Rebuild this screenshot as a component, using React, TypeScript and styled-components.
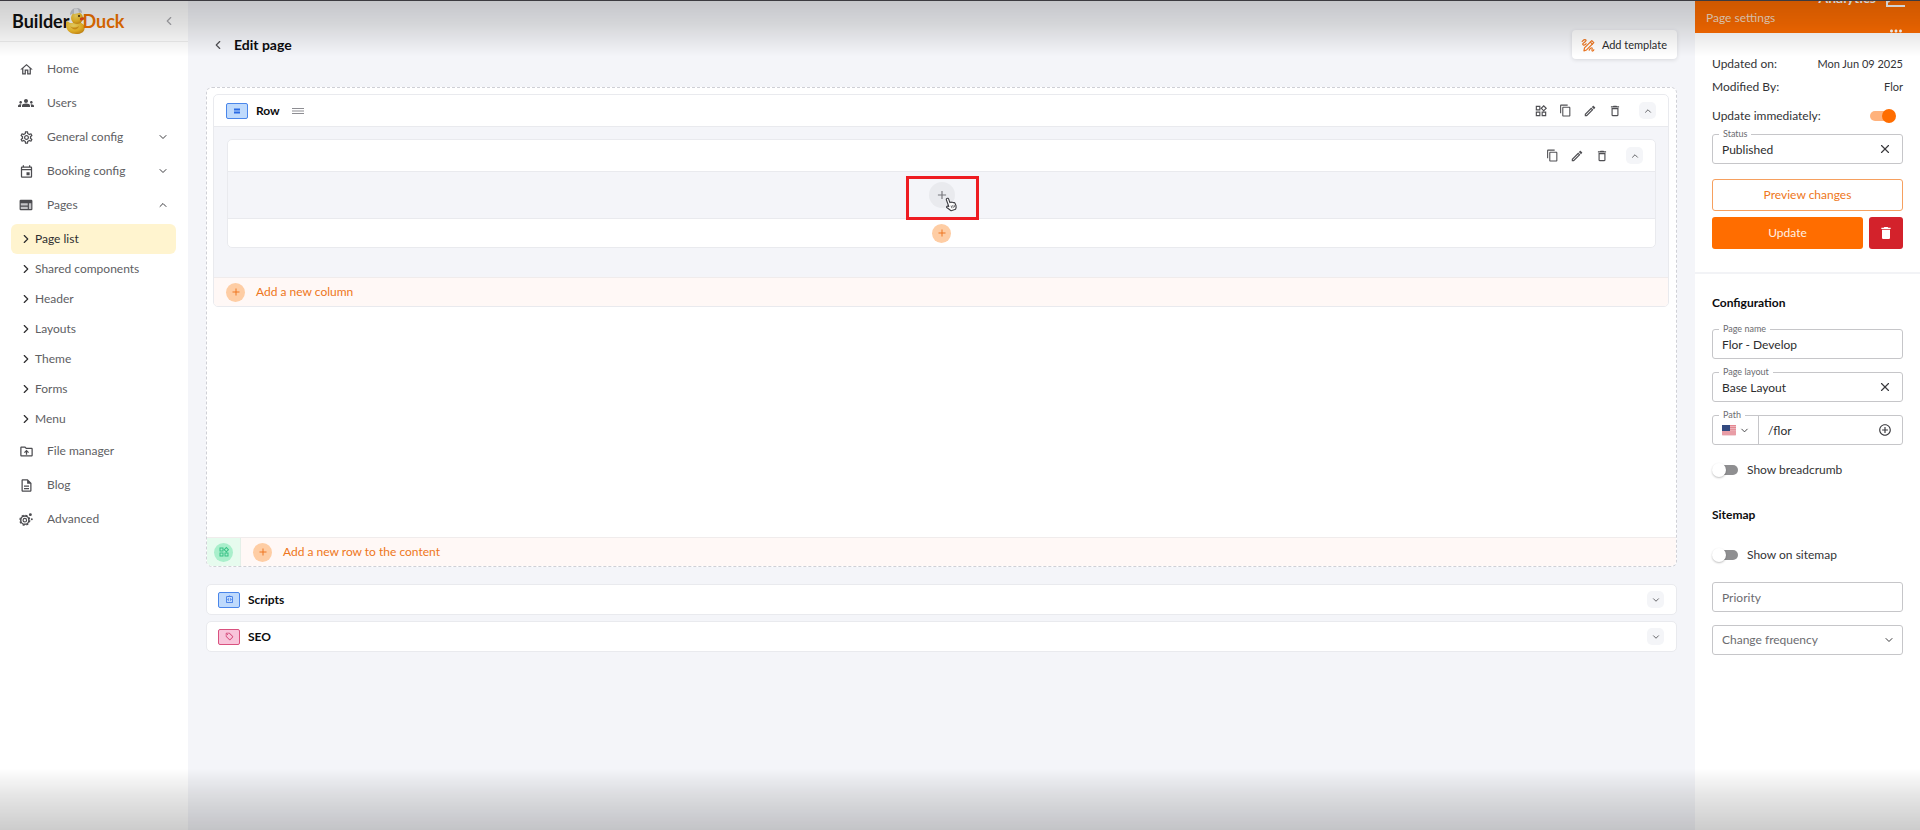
import React, { useState } from "react";
import styled, { createGlobalStyle, css } from "styled-components";
import {
  MdOutlineHome,
  MdGroups,
  MdOutlineSettings,
  MdOutlineEvent,
  MdOutlineDriveFolderUpload,
  MdOutlineDescription,
  MdContentCopy,
  MdDeleteOutline,
  MdDelete,
  MdOutlineEdit,
  MdOutlineWidgets,
  MdOutlineIntegrationInstructions,
  MdOutlineSell,
  MdAdd,
  MdMoreHoriz,
  MdOutlineAddCircleOutline,
} from "react-icons/md";
import { ChevronDown, ChevronLeft, ChevronRight, ChevronUp, X } from "lucide-react";

const orange = "#ff6d00";
const text = "#3a3a3c";

const GlobalStyle = createGlobalStyle`
  *, *::before, *::after { box-sizing: border-box; }
  body { margin: 0; background: #f4f5f9; }
  body, button, input, select {
    font-family: Lato, "Liberation Sans", sans-serif;
    font-size: 12px;
    line-height: 16px;
    color: ${text};
  }
  button { padding: 0; border: 0; background: none; cursor: pointer; }
  h1, h2, h3, p, ul { margin: 0; padding: 0; }
  ul { list-style: none; }
  a { color: inherit; text-decoration: none; }
  svg { display: block; flex: none; }
`;

const Page = styled.div`
  display: grid;
  grid-template-columns: 188px minmax(0, 1fr) 225px;
  min-height: 100vh;
`;

const Shade = styled.div<{ $edge: "top" | "bottom" }>`
  position: fixed;
  left: 0;
  right: 0;
  z-index: 5;
  pointer-events: none;
  ${({ $edge }) =>
    $edge === "top"
      ? css`
          top: 0;
          height: 56px;
          border-top: 1px solid #3c3a40;
          background: linear-gradient(rgba(0, 0, 0, 0.19), rgba(0, 0, 0, 0.12) 45%, rgba(0, 0, 0, 0));
        `
      : css`
          bottom: 0;
          height: 62px;
          background: linear-gradient(rgba(0, 0, 0, 0), rgba(0, 0, 0, 0.1) 45%, rgba(0, 0, 0, 0.2));
        `}
`;

/* ---------- Sidebar ---------- */

const Sidebar = styled.nav`
  background: #fff;
`;

const Brand = styled.header`
  display: flex;
  align-items: center;
  justify-content: space-between;
  height: 42px;
  padding: 0 12px;
  border-bottom: 1px solid #eeeeef;
`;

const Logo = styled.a`
  display: flex;
  align-items: center;
  font-family: Lato, sans-serif;
  font-size: 18px;
  font-weight: 700;
  line-height: 24px;
  color: #111;
  svg { margin: 0 -4px 0 -3px; }
`;

const LogoAccent = styled.span`
  color: #f07300;
`;

const Collapse = styled.button`
  color: #a9a9ad;
`;

const Menu = styled.ul`
  padding-top: 10px;
`;

const MenuLink = styled.a`
  display: flex;
  align-items: center;
  height: 34px;
  padding: 0 19px;
  color: #606063;
`;

const MenuIcon = styled.span`
  display: flex;
  justify-content: center;
  width: 14px;
  margin-right: 14px;
  color: #4c4c50;
`;

const MenuChevron = styled.span`
  margin-left: auto;
  color: #3c3c40;
`;

const SubMenu = styled.ul`
  padding: 2px 12px 0 11px;
`;

const SubLink = styled.a<{ $active?: boolean }>`
  display: flex;
  align-items: center;
  gap: 2px;
  height: 30px;
  padding-left: 8px;
  border-radius: 6px;
  background: ${({ $active }) => ($active ? "#fff4cf" : "transparent")};
  color: ${({ $active }) => ($active ? "#2e2e30" : "#606063")};
  svg { color: #2c2c2e; }
`;

/* ---------- Main ---------- */

const Main = styled.main`
  padding: 30px 18px;
`;

const TitleBar = styled.div`
  display: flex;
  align-items: center;
  justify-content: space-between;
  height: 29px;
  margin-bottom: 28px;
`;

const TitleGroup = styled.div`
  display: flex;
  align-items: center;
  gap: 9px;
  padding-left: 5px;
`;

const Title = styled.h1`
  font-size: 14px;
  line-height: 20px;
  font-weight: 700;
  color: #0c0c0e;
`;

const TemplateButton = styled.button`
  display: flex;
  align-items: center;
  gap: 7px;
  height: 29px;
  padding: 0 10px 0 9px;
  border-radius: 4px;
  background: #fff;
  box-shadow: 0 1px 4px rgba(0, 0, 0, 0.12);
  font-size: 11px;
  color: #2c2c2e;
  svg { color: #ee7620; }
`;

const Builder = styled.section`
  display: flex;
  flex-direction: column;
  margin-bottom: 17px;
  border: 1px dashed #cfd0d6;
  border-radius: 6px;
  background: #fff;
  overflow: hidden;
`;

const BuilderBody = styled.div`
  min-height: 449px;
  padding: 6px 7px 0 6px;
`;

const Card = styled.article`
  border: 1px solid #e9eaee;
  border-radius: 5px;
  background: #fff;
  overflow: hidden;
`;

const CardHead = styled.header`
  display: flex;
  align-items: center;
  gap: 8px;
  height: 32px;
  padding: 0 12px;
  border-bottom: 1px solid #e9eaee;
  color: #505054;
`;

const CardTitle = styled.h2`
  font-size: 12px;
  line-height: 18px;
  font-weight: 700;
  color: #0c0c0e;
`;

const Badge = styled.span<{ $tone: "blue" | "pink" }>`
  display: flex;
  align-items: center;
  justify-content: center;
  width: 22px;
  height: 16px;
  border: 1px solid ${({ $tone }) => ($tone === "blue" ? "#4a86ea" : "#d9517f")};
  border-radius: 2px;
  background: ${({ $tone }) => ($tone === "blue" ? "#bfdafc" : "#f8c4da")};
  color: ${({ $tone }) => ($tone === "blue" ? "#2b6be4" : "#d03d70")};
`;

const DragHandle = styled.button`
  display: flex;
  padding-left: 3px;
  color: #8d8d92;
`;

const Tools = styled.div`
  display: flex;
  align-items: center;
  gap: 11px;
  margin-left: auto;
`;

const IconButton = styled.button`
  display: flex;
  color: #505054;
`;

const RoundToggle = styled.button<{ $spaced?: boolean }>`
  display: flex;
  align-items: center;
  justify-content: center;
  width: 17px;
  height: 17px;
  margin-left: ${({ $spaced }) => ($spaced ? "6px" : "auto")};
  border-radius: 5px;
  background: #f4f5f8;
  color: #4a4a4e;
`;

const RowBody = styled.div`
  padding: 12px 12px 29px 13px;
  background: #f4f5f9;
`;

const DropZone = styled.div`
  position: relative;
  display: flex;
  justify-content: center;
  height: 47px;
  padding-top: 10px;
  border-bottom: 1px solid #e9eaee;
  background: #f4f5f9;
`;

const Highlight = styled.div`
  position: absolute;
  top: 4px;
  left: 50%;
  width: 73px;
  height: 44px;
  margin-left: -36px;
  border: 3px solid #ee1c22;
  z-index: 1;
  pointer-events: none;
`;

const Pointer = styled.svg`
  position: absolute;
  top: 25px;
  left: 50%;
  margin-left: 2px;
  z-index: 2;
`;

const AddCircle = styled.button<{ $tone: "grey" | "orange" | "green" }>`
  display: flex;
  align-items: center;
  justify-content: center;
  width: ${({ $tone }) => ($tone === "grey" ? "26px" : "19px")};
  height: ${({ $tone }) => ($tone === "grey" ? "26px" : "19px")};
  border-radius: 50%;
  background: ${({ $tone }) => ({ grey: "#e9eaee", orange: "#fecda4", green: "#a9efcb" })[$tone]};
  color: ${({ $tone }) => ({ grey: "#77777c", orange: "#ee7620", green: "#35c184" })[$tone]};
`;

const ColumnFoot = styled.div`
  display: flex;
  align-items: center;
  justify-content: center;
  height: 28px;
`;

const AddStrip = styled.div`
  display: flex;
  align-items: center;
  height: 29px;
  border-top: 1px solid #f0ecec;
  background: #fff8f6;
`;

const AddLabel = styled.button`
  display: flex;
  align-items: center;
  gap: 11px;
  padding-left: 12px;
  color: #ee7620;
`;

const GreenCell = styled.div`
  display: flex;
  align-items: center;
  justify-content: center;
  align-self: stretch;
  width: 34px;
  border-right: 1px solid #e4efe8;
  background: #e6fbee;
`;

const Collapsed = styled.div`
  display: flex;
  flex-direction: column;
  gap: 6px;
`;

const CollapsedCard = styled(Card)`
  display: flex;
  align-items: center;
  gap: 8px;
  height: 31px;
  padding: 0 12px 0 11px;
`;

/* ---------- Settings panel ---------- */

const Panel = styled.aside`
  background: #fff;
`;

const PanelHead = styled.header`
  position: relative;
  display: flex;
  align-items: center;
  height: 33px;
  padding: 2px 11px 0;
  background: ${orange};
  color: #f9dcc2;
  overflow: hidden;
`;

const Analytics = styled.a`
  position: absolute;
  top: -13px;
  right: 14px;
  display: flex;
  align-items: center;
  gap: 10px;
  font-size: 14px;
  font-weight: 700;
  line-height: 22px;
  color: #fff;
`;

const More = styled.button`
  position: absolute;
  top: 22px;
  right: 15px;
  color: #fff;
`;

const Block = styled.section<{ $first?: boolean }>`
  display: flex;
  flex-direction: column;
  padding: ${({ $first }) => ($first ? "19px 17px 23px" : "20px 17px")};
  border-bottom: ${({ $first }) => ($first ? "2px solid #f2f3f6" : "0")};
`;

const Fact = styled.div`
  display: flex;
  align-items: center;
  justify-content: space-between;
  height: 23px;
  color: #333336;
`;

const FactValue = styled.span`
  font-size: 11px;
`;

const FactSwitch = styled.label`
  display: flex;
  align-items: center;
  justify-content: space-between;
  height: 36px;
  padding-right: 7px;
  color: #333336;
`;

const Toggle = styled.input`
  appearance: none;
  position: relative;
  flex: none;
  width: 26px;
  height: 14px;
  margin: 0;
  cursor: pointer;
  &::before {
    content: "";
    position: absolute;
    inset: 2px 0 2px 2px;
    border-radius: 5px;
    background: #8f8f91;
  }
  &::after {
    content: "";
    position: absolute;
    top: 0;
    left: 0;
    width: 14px;
    height: 14px;
    border-radius: 50%;
    background: #fff;
    box-shadow: 0 1px 2px rgba(0, 0, 0, 0.25);
  }
  &:checked::before { inset: 2px 2px 2px 0; background: #ffb27c; }
  &:checked::after { left: 12px; background: ${orange}; box-shadow: none; }
`;

const SwitchLine = styled.label`
  display: flex;
  align-items: center;
  gap: 9px;
  height: 26px;
  color: #333336;
`;

const Field = styled.div`
  position: relative;
  display: flex;
  align-items: center;
  height: 30px;
  border: 1px solid #c6c6c9;
  border-radius: 3px;
`;

const FieldLabel = styled.label`
  position: absolute;
  top: -7px;
  left: 6px;
  padding: 0 4px;
  background: #fff;
  font-size: 9px;
  line-height: 12px;
  color: #6c6c70;
`;

const FieldInput = styled.input`
  flex: 1;
  min-width: 0;
  height: 28px;
  padding: 0 9px;
  border: 0;
  outline: 0;
  background: transparent;
  color: #2c2c2e;
  &::placeholder { color: #6c6c70; opacity: 1; }
`;

const FieldSelect = styled.select`
  appearance: none;
  flex: 1;
  height: 28px;
  padding: 0 9px;
  border: 0;
  outline: 0;
  background: transparent;
  color: #6c6c70;
`;

const FieldButton = styled.button`
  display: flex;
  margin-right: 10px;
  color: #3a3a3e;
`;

const SelectArrow = styled.span`
  position: absolute;
  right: 7px;
  pointer-events: none;
`;

const Locale = styled.button`
  display: flex;
  align-items: center;
  gap: 3px;
  align-self: stretch;
  width: 46px;
  padding-left: 9px;
  border-right: 1px solid #c6c6c9;
`;

const Fields = styled.div`
  display: flex;
  flex-direction: column;
  gap: 13px;
`;

const Actions = styled.div`
  display: grid;
  grid-template-columns: 1fr 34px;
  gap: 6px;
  margin-top: 15px;
`;

const Action = styled.button<{ $kind: "outline" | "solid" | "danger" }>`
  display: flex;
  align-items: center;
  justify-content: center;
  height: 32px;
  border-radius: 3px;
  ${({ $kind }) =>
    ({
      outline: css`
        grid-column: 1 / -1;
        border: 1px solid #f6a05f;
        background: #fff;
        color: #ee7620;
      `,
      solid: css`
        background: ${orange};
        color: #fff0e2;
      `,
      danger: css`
        background: #d3222b;
        color: #fff;
      `,
    })[$kind]}
`;

const SectionTitle = styled.h3<{ $space: number }>`
  margin-bottom: ${({ $space }) => $space}px;
  font-size: 12px;
  line-height: 18px;
  font-weight: 700;
  color: #0c0c0e;
`;

const Gap = styled.div<{ $size: number }>`
  height: ${({ $size }) => $size}px;
`;

/* ---------- Drawings ---------- */

const Duck = () => (
  <svg width="20" height="28" viewBox="0 0 20 28" aria-hidden="true">
    <defs>
      <radialGradient id="duck" cx="0.4" cy="0.3" r="0.8">
        <stop offset="0" stopColor="#ffe36a" />
        <stop offset="0.6" stopColor="#f5bd27" />
        <stop offset="1" stopColor="#c98312" />
      </radialGradient>
    </defs>
    <path d="M0 15c1-1 3 0 4 1h4c3-1 8-1 10 2 2 5-1 9-8 9S-1 22 0 15z" fill="url(#duck)" />
    <circle cx="11" cy="11" r="6" fill="url(#duck)" />
    <path d="M14 11c2-1 4-1 5 0-1 2-3 3-5 2z" fill="#e8491c" />
    <circle cx="13" cy="9" r="1" fill="#3b2a10" />
    <path d="M4 8c0-4 3-7 6-7 4 0 6 2 6 5-4-1-8 0-12 2z" fill="#c9ccd2" />
    <path d="M8 2c1-1 3-1 4 0l1 4-5 1z" fill="#eef0f3" />
    <path d="M4 19c2 2 6 2 9 0-1 4-6 5-9 0z" fill="#dd9a1a" />
  </svg>
);

const TemplateIcon = () => (
  <svg
    width="14"
    height="14"
    viewBox="0 0 24 24"
    fill="none"
    stroke="currentColor"
    strokeWidth="2"
    strokeLinejoin="round"
    strokeLinecap="round"
    aria-hidden="true"
  >
    <path d="M5 22l1-5L18.500 4.500l3.500 3.500L9.500 20.500z" />
    <path d="M16 7l3.500 3.500" />
    <path d="M2 6c2-3 4-4 6-3s-1 4-3 5-3 3-1 4 3-1 5-2" />
    <path d="M14 21c1-3 4-5 5-4s-1 4 0 5 2 0 3-2" />
  </svg>
);

const PagesIcon = () => (
  <svg width="14" height="14" viewBox="0 0 24 24" aria-hidden="true">
    <path
      fill="currentColor"
      d="M3 3h18a2 2 0 0 1 2 2v14a2 2 0 0 1-2 2H3a2 2 0 0 1-2-2V5a2 2 0 0 1 2-2z"
    />
    <path fill="#c4c4c7" d="M3 9h12v4H3zM17 9h4v10h-4zM3 15h12v4H3z" />
  </svg>
);

const AdvancedIcon = () => (
  <svg width="14" height="14" viewBox="0 0 24 24" aria-hidden="true" fill="none" stroke="currentColor">
    <circle cx="10" cy="14" r="7" strokeWidth="2.5" />
    <circle cx="10" cy="14" r="8.5" strokeWidth="2" strokeDasharray="3.6 3.08" />
    <circle cx="10" cy="14" r="3" strokeWidth="2" />
    <circle cx="19.5" cy="4.5" r="2.5" fill="currentColor" stroke="none" />
    <circle cx="22" cy="12.5" r="1.6" fill="currentColor" stroke="none" />
  </svg>
);

const RowGlyph = () => (
  <svg width="8" height="8" viewBox="0 0 8 8" aria-hidden="true">
    <path d="M1 2.500h6M1 5.500h6" stroke="currentColor" strokeWidth="2" />
  </svg>
);

const ChartIcon = () => (
  <svg width="20" height="18" viewBox="0 0 20 18" fill="none" stroke="currentColor" aria-hidden="true">
    <path d="M1 0v17h18" strokeWidth="2" />
    <path d="M2 13l6-6 4 3 6-8" strokeWidth="2" />
  </svg>
);

const Flag = () => (
  <svg width="14" height="11" viewBox="0 0 14 11" aria-hidden="true">
    <rect width="14" height="11" rx="1" fill="#f3d6da" />
    <path d="M0 .8h14M0 2.8h14M0 4.9h14M0 7h14M0 9h14" stroke="#de6573" strokeWidth="1" />
    <rect width="8" height="6" fill="#334a80" />
  </svg>
);

const HandPointer = () => (
  <Pointer width="15" height="15" viewBox="0 0 16 16" aria-hidden="true">
    <path
      d="M3 1.500c.9-.5 1.700 0 2 .8L6.300 6l.6-.4c.6-.3 1.200-.1 1.500.3.600-.4 1.300-.3 1.700.2.700-.3 1.400 0 1.700.7l1 2.600c.4 1.500.1 2.600-.5 3.700l-4.600 1.600c-1.400-1-2.800-2.200-4.800-3.500-.6-.6.100-1.700 1.300-1.300l.9.300L2.500 3c-.3-.7 0-1.200.5-1.500z"
      fill="#fff"
      stroke="#3f3f45"
      strokeWidth="1.2"
      strokeLinejoin="round"
    />
    <path d="M7.500 9.200l1 2.800M9.100 8.800l1 2.700M10.700 8.400l.8 2.500" stroke="#3f3f45" strokeWidth=".8" />
  </Pointer>
);

/* ---------- Data ---------- */

const topItems = [
  { label: "Home", icon: <MdOutlineHome size={15} /> },
  { label: "Users", icon: <MdGroups size={16} /> },
  { label: "General config", icon: <MdOutlineSettings size={15} />, chevron: <ChevronDown size={12} /> },
  { label: "Booking config", icon: <MdOutlineEvent size={15} />, chevron: <ChevronDown size={12} /> },
  { label: "Pages", icon: <PagesIcon />, chevron: <ChevronUp size={12} /> },
];

const pageItems = ["Page list", "Shared components", "Header", "Layouts", "Theme", "Forms", "Menu"];

const bottomItems = [
  { label: "File manager", icon: <MdOutlineDriveFolderUpload size={15} /> },
  { label: "Blog", icon: <MdOutlineDescription size={15} /> },
  { label: "Advanced", icon: <AdvancedIcon /> },
];

type Item = { label: string; icon: React.ReactNode; chevron?: React.ReactNode };

const MenuEntry = ({ label, icon, chevron }: Item) => (
  <MenuLink href="#">
    <MenuIcon>{icon}</MenuIcon>
    {label}
    {chevron && <MenuChevron>{chevron}</MenuChevron>}
  </MenuLink>
);

const EditTools = ({ widgets }: { widgets?: boolean }) => (
  <Tools>
    {widgets && (
      <IconButton aria-label="Widgets">
        <MdOutlineWidgets size={14} />
      </IconButton>
    )}
    <IconButton aria-label="Copy">
      <MdContentCopy size={13} />
    </IconButton>
    <IconButton aria-label="Edit">
      <MdOutlineEdit size={14} />
    </IconButton>
    <IconButton aria-label="Delete">
      <MdDeleteOutline size={14} />
    </IconButton>
    <RoundToggle $spaced aria-label="Collapse">
      <ChevronUp size={10} />
    </RoundToggle>
  </Tools>
);

export default function App() {
  const [immediate, setImmediate] = useState(true);
  const [breadcrumb, setBreadcrumb] = useState(false);
  const [sitemap, setSitemap] = useState(false);
  const [status, setStatus] = useState("Published");
  const [layout, setLayout] = useState("Base Layout");

  return (
    <>
      <GlobalStyle />
      <Shade $edge="top" />
      <Shade $edge="bottom" />
      <Page>
        <Sidebar>
          <Brand>
            <Logo href="#">
              Builder
              <Duck />
              <LogoAccent>Duck</LogoAccent>
            </Logo>
            <Collapse aria-label="Collapse menu">
              <ChevronLeft size={14} />
            </Collapse>
          </Brand>
          <Menu>
            {topItems.map((item) => (
              <li key={item.label}>
                <MenuEntry {...item} />
                {item.label === "Pages" && (
                  <SubMenu>
                    {pageItems.map((label, i) => (
                      <li key={label}>
                        <SubLink href="#" $active={i === 0}>
                          <ChevronRight size={14} />
                          {label}
                        </SubLink>
                      </li>
                    ))}
                  </SubMenu>
                )}
              </li>
            ))}
            {bottomItems.map((item) => (
              <li key={item.label}>
                <MenuEntry {...item} />
              </li>
            ))}
          </Menu>
        </Sidebar>

        <Main>
          <TitleBar>
            <TitleGroup>
              <IconButton aria-label="Back">
                <ChevronLeft size={14} />
              </IconButton>
              <Title>Edit page</Title>
            </TitleGroup>
            <TemplateButton>
              <TemplateIcon />
              Add template
            </TemplateButton>
          </TitleBar>

          <Builder>
            <BuilderBody>
              <Card>
                <CardHead>
                  <Badge $tone="blue">
                    <RowGlyph />
                  </Badge>
                  <CardTitle>Row</CardTitle>
                  <DragHandle aria-label="Move row">
                    <svg width="14" height="8" viewBox="0 0 14 8" aria-hidden="true">
                      <path d="M1 1.500h12M1 4h12M1 6.500h12" stroke="currentColor" strokeWidth="1" />
                    </svg>
                  </DragHandle>
                  <EditTools widgets />
                </CardHead>
                <RowBody>
                  <Card>
                    <CardHead>
                      <EditTools />
                    </CardHead>
                    <DropZone>
                      <AddCircle $tone="grey" aria-label="Add component">
                        <MdAdd size={14} />
                      </AddCircle>
                      <Highlight />
                      <HandPointer />
                    </DropZone>
                    <ColumnFoot>
                      <AddCircle $tone="orange" aria-label="Add block">
                        <MdAdd size={12} />
                      </AddCircle>
                    </ColumnFoot>
                  </Card>
                </RowBody>
                <AddStrip>
                  <AddLabel>
                    <AddCircle as="span" $tone="orange">
                      <MdAdd size={12} />
                    </AddCircle>
                    Add a new column
                  </AddLabel>
                </AddStrip>
              </Card>
            </BuilderBody>
            <AddStrip>
              <GreenCell>
                <AddCircle $tone="green" aria-label="Shared components">
                  <MdOutlineWidgets size={12} />
                </AddCircle>
              </GreenCell>
              <AddLabel>
                <AddCircle as="span" $tone="orange">
                  <MdAdd size={12} />
                </AddCircle>
                Add a new row to the content
              </AddLabel>
            </AddStrip>
          </Builder>

          <Collapsed>
            <CollapsedCard>
              <Badge $tone="blue">
                <MdOutlineIntegrationInstructions size={9} />
              </Badge>
              <CardTitle>Scripts</CardTitle>
              <RoundToggle aria-label="Expand scripts">
                <ChevronDown size={10} />
              </RoundToggle>
            </CollapsedCard>
            <CollapsedCard>
              <Badge $tone="pink">
                <MdOutlineSell size={9} />
              </Badge>
              <CardTitle>SEO</CardTitle>
              <RoundToggle aria-label="Expand SEO">
                <ChevronDown size={10} />
              </RoundToggle>
            </CollapsedCard>
          </Collapsed>
        </Main>

        <Panel>
          <PanelHead>
            Page settings
            <Analytics href="#">
              Analytics
              <ChartIcon />
            </Analytics>
            <More aria-label="More">
              <MdMoreHoriz size={18} />
            </More>
          </PanelHead>
          <Block $first>
            <Fact>
              <span>Updated on:</span>
              <FactValue>Mon Jun 09 2025</FactValue>
            </Fact>
            <Fact>
              <span>Modified By:</span>
              <FactValue>Flor</FactValue>
            </Fact>
            <FactSwitch>
              Update immediately:
              <Toggle type="checkbox" checked={immediate} onChange={(e) => setImmediate(e.target.checked)} />
            </FactSwitch>
            <Field>
              <FieldLabel htmlFor="status">Status</FieldLabel>
              <FieldInput id="status" value={status} onChange={(e) => setStatus(e.target.value)} />
              <FieldButton aria-label="Clear status" onClick={() => setStatus("")}>
                <X size={14} />
              </FieldButton>
            </Field>
            <Actions>
              <Action $kind="outline">Preview changes</Action>
              <Action $kind="solid">Update</Action>
              <Action $kind="danger" aria-label="Delete page">
                <MdDelete size={16} />
              </Action>
            </Actions>
          </Block>
          <Block>
            <SectionTitle $space={17}>Configuration</SectionTitle>
            <Fields>
              <Field>
                <FieldLabel htmlFor="name">Page name</FieldLabel>
                <FieldInput id="name" defaultValue="Flor - Develop" />
              </Field>
              <Field>
                <FieldLabel htmlFor="layout">Page layout</FieldLabel>
                <FieldInput id="layout" value={layout} onChange={(e) => setLayout(e.target.value)} />
                <FieldButton aria-label="Clear layout" onClick={() => setLayout("")}>
                  <X size={14} />
                </FieldButton>
              </Field>
              <Field>
                <FieldLabel htmlFor="path">Path</FieldLabel>
                <Locale aria-label="Language">
                  <Flag />
                  <ChevronDown size={11} />
                </Locale>
                <FieldInput id="path" defaultValue="/flor" />
                <FieldButton aria-label="Add path">
                  <MdOutlineAddCircleOutline size={14} />
                </FieldButton>
              </Field>
            </Fields>
            <Gap $size={12} />
            <SwitchLine>
              <Toggle type="checkbox" checked={breadcrumb} onChange={(e) => setBreadcrumb(e.target.checked)} />
              Show breadcrumb
            </SwitchLine>
            <Gap $size={23} />
            <SectionTitle $space={18}>Sitemap</SectionTitle>
            <SwitchLine>
              <Toggle type="checkbox" checked={sitemap} onChange={(e) => setSitemap(e.target.checked)} />
              Show on sitemap
            </SwitchLine>
            <Gap $size={14} />
            <Fields>
              <Field>
                <FieldInput aria-label="Priority" placeholder="Priority" />
              </Field>
              <Field>
                <FieldSelect aria-label="Change frequency" defaultValue="">
                  <option value="">Change frequency</option>
                  <option value="daily">Daily</option>
                  <option value="weekly">Weekly</option>
                </FieldSelect>
                <SelectArrow>
                  <ChevronDown size={12} />
                </SelectArrow>
              </Field>
            </Fields>
          </Block>
        </Panel>
      </Page>
    </>
  );
}
